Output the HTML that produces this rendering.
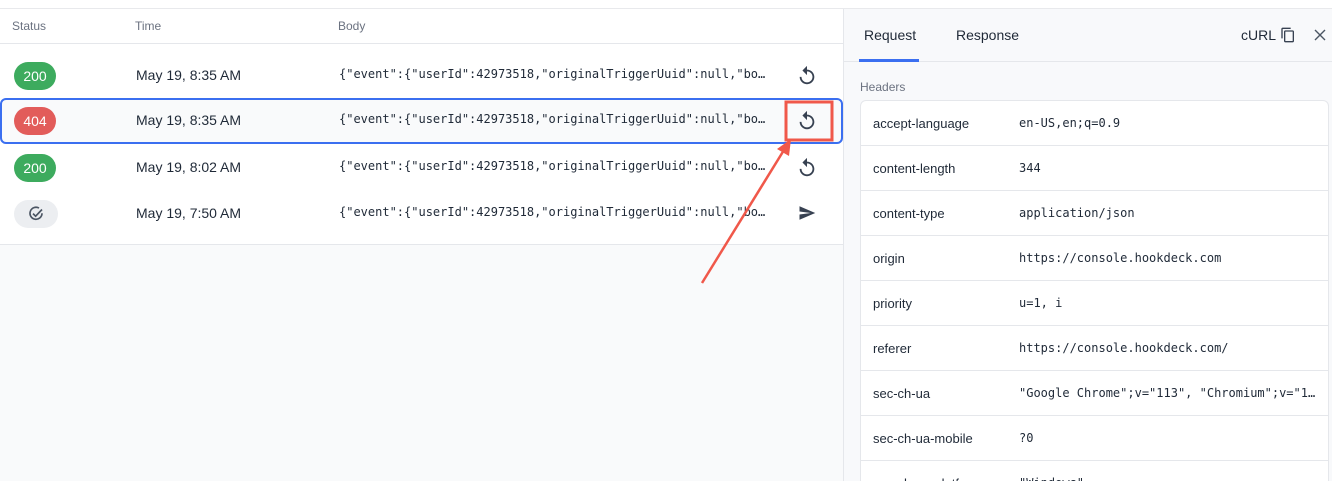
<!DOCTYPE html>
<html><head><style>
body{margin:0;width:1332px;height:481px;overflow:hidden;background:#fff;font-family:"Liberation Sans",sans-serif;position:relative}
.top{position:absolute;left:0;top:0;width:1332px;height:8px;border-bottom:1px solid #e8e9ec;background:#fff}
.left{position:absolute;left:0;top:9px;width:843px;height:472px;background:#f9fafb;border-right:1px solid #e5e7eb}
.thead{position:absolute;left:0;top:0;width:843px;height:34px;background:#fff;border-bottom:1px solid #e5e7eb;font-size:12px;color:#6b7280}
.thead span{position:absolute;top:10px}
.tbody{position:absolute;left:0;top:35px;width:843px;height:200px;background:#fff;border-bottom:1px solid #e5e7eb}
.row{position:absolute;left:0;width:843px;height:46px}
.badge{position:absolute;left:14px;top:10px;width:42px;height:28px;border-radius:14px;color:#fff;font-size:14px;text-align:center;line-height:28px}
.time{position:absolute;left:136px;top:15px;font-size:14px;color:#1f2937}
.body{position:absolute;left:339px;top:15px;font-family:"DejaVu Sans Mono","Liberation Mono",monospace;font-size:12px;color:#1f2937;white-space:nowrap;width:432px;overflow:hidden;text-overflow:ellipsis}
.ic{position:absolute;left:796px;top:13px}
.right{position:absolute;left:844px;top:9px;width:488px;height:472px;background:#f8f9fb;overflow:hidden}
.tabs{position:absolute;left:0;top:0;width:488px;height:52px;border-bottom:1px solid #e5e7eb}
.card{position:absolute;left:16px;top:91px;width:467px;height:400px;background:#fff;border:1px solid #e5e7eb;border-radius:6px}
.hr{position:absolute;left:0;width:467px;height:44px;border-bottom:1px solid #e5e7eb}
.hr .k{position:absolute;left:12px;top:15px;font-size:13px;color:#1f2937}
.hr .v{position:absolute;left:158px;top:15px;font-family:"DejaVu Sans Mono","Liberation Mono",monospace;font-size:12px;color:#1f2937;white-space:nowrap;width:302px;overflow:hidden;text-overflow:ellipsis}
</style></head><body>
<div class="top"></div>
<div class="left">
 <div class="thead"><span style="left:12px">Status</span><span style="left:135px">Time</span><span style="left:338px">Body</span></div>
 <div class="tbody">
  <div class="row" style="top:8px"><div class="badge" style="background:#3dab5e">200</div><div class="time">May 19, 8:35 AM</div><div class="body">{"event":{"userId":42973518,"originalTriggerUuid":null,"board"</div>
   <svg class="ic" width="22" height="22" viewBox="0 0 24 24"><path d="M12 5V1L7 6l5 5V7c3.3 0 6 2.7 6 6s-2.7 6-6 6-6-2.7-6-6H4c0 4.4 3.6 8 8 8s8-3.6 8-8-3.6-8-8-8z" fill="#374151"/></svg></div>
  <div class="row" style="top:54px;left:0;width:843px;height:46px;box-sizing:border-box;border:2px solid #3b6ff0;border-radius:6px;background:#f9fafb">
   <div style="position:absolute;left:-2px;top:-2px;width:843px;height:46px">
   <div class="badge" style="background:#e25c5a;top:9px">404</div><div class="time" style="top:14px">May 19, 8:35 AM</div><div class="body" style="top:14px">{"event":{"userId":42973518,"originalTriggerUuid":null,"board"</div>
   <svg class="ic" style="top:12px" width="22" height="22" viewBox="0 0 24 24"><path d="M12 5V1L7 6l5 5V7c3.3 0 6 2.7 6 6s-2.7 6-6 6-6-2.7-6-6H4c0 4.4 3.6 8 8 8s8-3.6 8-8-3.6-8-8-8z" fill="#374151"/></svg></div></div>
  <div class="row" style="top:100px"><div class="badge" style="background:#3dab5e">200</div><div class="time">May 19, 8:02 AM</div><div class="body">{"event":{"userId":42973518,"originalTriggerUuid":null,"board"</div>
   <svg class="ic" width="22" height="22" viewBox="0 0 24 24"><path d="M12 5V1L7 6l5 5V7c3.3 0 6 2.7 6 6s-2.7 6-6 6-6-2.7-6-6H4c0 4.4 3.6 8 8 8s8-3.6 8-8-3.6-8-8-8z" fill="#374151"/></svg></div>
  <div class="row" style="top:146px"><div class="badge" style="background:#eceef1;width:44px"><svg width="18" height="18" viewBox="0 0 24 24" style="margin-top:5px"><path d="M20 11a8 8 0 1 1-4-6.9" fill="none" stroke="#4b5563" stroke-width="2.2"/><path d="M8 11.5l3.5 3.5L20 6" fill="none" stroke="#4b5563" stroke-width="2.2"/></svg></div><div class="time">May 19, 7:50 AM</div><div class="body">{"event":{"userId":42973518,"originalTriggerUuid":null,"board"</div>
   <svg class="ic" style="left:797px;top:14px" width="20" height="18" viewBox="0 0 24 24"><path d="M2 21l21-9L2 3v7l15 2-15 2z" fill="#374151"/></svg></div>
 </div>
</div>
<div class="right">
 <div class="tabs">
  <span style="position:absolute;left:20px;top:18px;font-size:14px;color:#1f2937">Request</span>
  <div style="position:absolute;left:15px;top:50px;width:60px;height:3px;background:#3b6ff0"></div>
  <span style="position:absolute;left:112px;top:18px;font-size:14px;color:#1f2937">Response</span>
  <span style="position:absolute;left:397px;top:18px;font-size:14px;color:#1f2937">cURL</span>
  <svg style="position:absolute;left:436px;top:18px" width="16" height="16" viewBox="0 0 24 24"><path d="M16 1H4c-1.1 0-2 .9-2 2v14h2V3h12V1zm3 4H8c-1.1 0-2 .9-2 2v14c0 1.1.9 2 2 2h11c1.1 0 2-.9 2-2V7c0-1.1-.9-2-2-2zm0 16H8V7h11v14z" fill="#374151"/></svg>
  <svg style="position:absolute;left:470px;top:20px" width="12" height="12" viewBox="0 0 12 12"><path d="M1 1l10 10M11 1L1 11" stroke="#4b5563" stroke-width="1.4"/></svg>
 </div>
 <span style="position:absolute;left:16px;top:71px;font-size:12px;color:#6b7280">Headers</span>
 <div class="card">
  <div class="hr" style="top:0"><span class="k">accept-language</span><span class="v">en-US,en;q=0.9</span></div>
  <div class="hr" style="top:45px"><span class="k">content-length</span><span class="v">344</span></div>
  <div class="hr" style="top:90px"><span class="k">content-type</span><span class="v">application/json</span></div>
  <div class="hr" style="top:135px"><span class="k">origin</span><span class="v">https://console.hookdeck.com</span></div>
  <div class="hr" style="top:180px"><span class="k">priority</span><span class="v">u=1, i</span></div>
  <div class="hr" style="top:225px"><span class="k">referer</span><span class="v">https://console.hookdeck.com/</span></div>
  <div class="hr" style="top:270px"><span class="k">sec-ch-ua</span><span class="v">"Google Chrome";v="113", "Chromium";v="113"</span></div>
  <div class="hr" style="top:315px"><span class="k">sec-ch-ua-mobile</span><span class="v">?0</span></div>
  <div class="hr" style="top:360px"><span class="k">sec-ch-ua-platform</span><span class="v">"Windows"</span></div>
 </div>
</div>
<svg style="position:absolute;left:0;top:0" width="1332" height="481">
 <rect x="786" y="102" width="46" height="38" fill="none" stroke="#f0584a" stroke-width="3"/>
 <line x1="702" y1="283" x2="784" y2="150" stroke="#f0584a" stroke-width="2.5"/>
 <path d="M791 139l-2 17-12-7z" fill="#f0584a"/>
</svg>
</body></html>
